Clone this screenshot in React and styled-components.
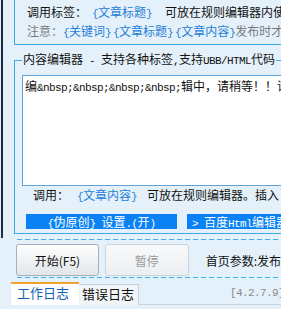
import React from "react";
import styled, { createGlobalStyle } from "styled-components";

const Global = createGlobalStyle`
  html, body { margin: 0; padding: 0; background: #e5f1fa; overflow: hidden; }
  body { width: 281px; height: 309px; font-family: "Noto Sans CJK SC", "Liberation Sans", sans-serif; font-size: 12px; color: #111; }
  * { box-sizing: border-box; }
`;

const Frame = styled.div`
  width: 281px;
  height: 309px;
  overflow: hidden;
  position: relative;
`;

const Panel = styled.div`
  margin-left: 1px;
  border-left: 2px solid #1c2b45;
  height: 238px;
  padding-left: 11px;
  width: 460px;
`;

const TopBox = styled.div`
  border: 1px solid #3ca8e6;
  border-top: none;
  padding: 2px 0 4px 12px;
  height: 45px;
`;

const Line = styled.div`
  line-height: 19px;
  height: 19px;
  white-space: nowrap;
  color: ${(p) => (p.$muted ? "#7a7a7a" : "#111")};
`;

const Mono = styled.span`
  font-family: "Liberation Mono", monospace;
  font-size: 11px;
  letter-spacing: -0.6px;
`;

const TagText = styled.span`
  color: ${(p) => (p.$plain ? "inherit" : "#1f80d8")};
  margin-left: ${(p) => p.$left || 0}px;
  margin-right: ${(p) => p.$gap || 0}px;
`;

const Tag = ({ children, ...rest }) => (
  <TagText {...rest}>
    <Mono>{"{"}</Mono>
    {children}
    <Mono>{"}"}</Mono>
  </TagText>
);

const Fieldset = styled.fieldset`
  margin: 6px 0 0 0;
  border: 1px solid #3ca8e6;
  padding: 6px 0 6px 7px;
  min-width: 0;
  height: 183px;
`;

const Legend = styled.legend`
  padding: 0 1px;
  line-height: 16px;
  font-size: 12px;
  white-space: nowrap;
  color: #111;
`;

const Editor = styled.div`
  height: 111px;
  background: #fff;
  border: 1px solid #5fa3d6;
  padding: 2px 2px;
  line-height: 16px;
  white-space: nowrap;
  overflow: hidden;
`;

const CallRow = styled.div`
  height: 18px;
  line-height: 18px;
  padding-left: 11px;
  white-space: nowrap;
`;

const BlueRow = styled.div`
  display: flex;
  gap: 10px;
  margin-top: 10px;
  padding-left: 4px;
`;

const BlueButton = styled.div`
  height: 15px;
  line-height: 15px;
  background: #0a82f5;
  color: #fff;
  width: ${(p) => p.$w}px;
  text-align: ${(p) => (p.$center ? "center" : "left")};
  padding-left: ${(p) => (p.$center ? 0 : 5)}px;
  white-space: nowrap;
  overflow: hidden;
`;

const Lower = styled.div`
  padding-left: 16px;
`;

const Dashed = styled.div`
  height: 1px;
  margin-left: 1px;
  margin-top: ${(p) => p.$mt || 0}px;
  background: repeating-linear-gradient(90deg, #3cb0e8 0 5px, transparent 5px 8px);
`;

const ButtonRow = styled.div`
  display: flex;
  align-items: center;
  gap: 6px;
  margin-top: 4px;
  height: 32px;
`;

const Btn = styled.button`
  height: 32px;
  width: ${(p) => p.$w}px;
  border: 1px solid ${(p) => (p.$disabled ? "#c9d3dd" : "#a3b0be")};
  border-radius: 3px;
  background: ${(p) =>
    p.$disabled
      ? "linear-gradient(#f8f9fa, #eceff2)"
      : "linear-gradient(#fefefe, #e2e6ea)"};
  color: ${(p) => (p.$disabled ? "#9a9a9a" : "#111")};
  font-family: "Noto Sans CJK SC", sans-serif;
  font-size: 12px;
  padding: 0;
`;

const Param = styled.span`
  margin-left: 11px;
  white-space: nowrap;
`;

const TabBar = styled.div`
  display: flex;
  align-items: flex-end;
  margin-top: 3px;
  margin-left: -5px;
  height: 24px;
  border-bottom: 1px solid #c6d2de;
  width: 300px;
`;

const Tab = styled.div`
  height: ${(p) => (p.$active ? 23 : 21)}px;
  line-height: 17px;
  padding: 0 ${(p) => (p.$active ? 10 : 4)}px 0 ${(p) => (p.$active ? 6 : 3)}px;
  background: ${(p) => (p.$active ? "#fff" : "#f2f5f8")};
  border-top: ${(p) => (p.$active ? "2px solid #f0a22e" : "1px solid #c6d2de")};
  border-right: ${(p) => (p.$active ? "none" : "1px solid #c6d2de")};
  color: ${(p) => (p.$active ? "#135fb8" : "#111")};
  font-size: 13px;
  white-space: nowrap;
  margin-bottom: -1px;
`;

const Version = styled.span`
  font-family: "Liberation Mono", monospace;
  font-size: 11px;
  letter-spacing: -0.6px;
  color: #8a8a8a;
  margin-left: auto;
  margin-right: 27px;
  align-self: center;
`;

export default function App() {
  return (
    <Frame>
      <Global />
      <Panel>
        <TopBox>
          <Line>
            调用标签：<Tag $left={5} $gap={13}>文章标题</Tag>
            <TagText $plain>可放在规则编辑器内使用</TagText>
          </Line>
          <Line $muted>
            注意：<Tag $gap={2}>关键词</Tag>
            <Tag $gap={2}>文章标题</Tag>
            <Tag>文章内容</Tag>发布时才会替换
          </Line>
        </TopBox>
        <Fieldset>
          <Legend>
            内容编辑器<Mono> - </Mono>支持各种标签<Mono>,</Mono>支持<Mono>UBB/HTML</Mono>代码
          </Legend>
          <Editor>
            编<Mono>&amp;nbsp;&amp;nbsp;&amp;nbsp;&amp;nbsp;</Mono>辑中，请稍等！！请
          </Editor>
          <CallRow>
            调用：<Tag $left={8} $gap={10}>文章内容</Tag>可放在规则编辑器。插入
          </CallRow>
          <BlueRow>
            <BlueButton $w={151} $center>
              <Mono>{"{"}</Mono>伪原创<Mono>{"} "}</Mono>设置<Mono>.(</Mono>开<Mono>)</Mono>
            </BlueButton>
            <BlueButton $w={200}>
              <Mono>&gt; </Mono>百度<Mono>Html</Mono>编辑器
            </BlueButton>
          </BlueRow>
        </Fieldset>
      </Panel>
      <Lower>
        <Dashed $mt={1} />
        <ButtonRow>
          <Btn $w={88}>开始(F5)</Btn>
          <Btn $w={89} $disabled>暂停</Btn>
          <Param>首页参数:发布</Param>
        </ButtonRow>
        <Dashed $mt={1} />
        <TabBar>
          <Tab $active>工作日志</Tab>
          <Tab>错误日志</Tab>
          <Version>[4.2.7.9]</Version>
        </TabBar>
      </Lower>
    </Frame>
  );
}
